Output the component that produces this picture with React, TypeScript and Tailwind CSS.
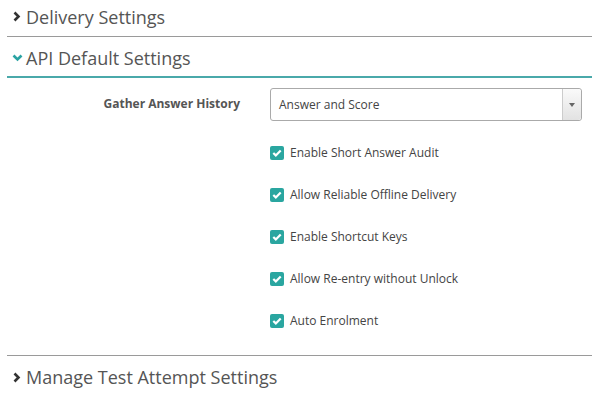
import { useState } from "react";

const options = [
  "Enable Short Answer Audit",
  "Allow Reliable Offline Delivery",
  "Enable Shortcut Keys",
  "Allow Re-entry without Unlock",
  "Auto Enrolment",
];

function Chevron({ open }: { open?: boolean }) {
  if (open) {
    return (
      <svg width="11" height="8" viewBox="0 0 11 8" className="shrink-0">
        <path d="M1.5 1.5 L5.5 5.5 L9.5 1.5" fill="none" stroke="#2aa3a3" strokeWidth="2.6" />
      </svg>
    );
  }
  return (
    <svg width="8" height="11" viewBox="0 0 8 11" className="shrink-0">
      <path d="M1.5 1.5 L5.5 5.5 L1.5 9.5" fill="none" stroke="#333" strokeWidth="2.6" />
    </svg>
  );
}

function Check() {
  return (
    <span className="flex h-[14px] w-[14px] items-center justify-center rounded-[2px] bg-[#2aa6a0]">
      <svg width="10" height="8" viewBox="0 0 10 8">
        <path d="M1.3 4 L3.8 6.4 L8.7 1.4" fill="none" stroke="#fff" strokeWidth="2.2" />
      </svg>
    </span>
  );
}

export default function App() {
  const [checked] = useState(options.map(() => true));

  return (
    <div className="h-[396px] w-[600px] bg-white pl-[7px] pr-[8px] font-['Open_Sans',sans-serif] text-[#555]">
      <div className="flex h-[37px] items-center gap-[5px] border-b border-[#9a9a9a] pl-[6px] pb-[3px]">
        <Chevron />
        <span className="text-[18px] leading-none">Delivery Settings</span>
      </div>

      <div className="flex h-[41px] items-center gap-[3px] border-b-2 border-[#4aa9aa] pl-[5px] pt-[2px]">
        <Chevron open />
        <span className="text-[18px] leading-none">API Default Settings</span>
      </div>

      <div className="h-[278px] border-b border-[#9a9a9a]">
        <div className="flex pt-[10px]">
          <div className="w-[233px] pt-[7px] text-right text-[12px] font-bold text-[#555]">
            Gather Answer History
          </div>
          <div className="ml-[30px] flex h-[33px] w-[312px] items-center rounded-[3px] border border-[#aaa] bg-white">
            <span className="flex-1 pl-[8px] text-[12px] text-[#444]">Answer and Score</span>
            <span className="flex h-full w-[19px] items-center justify-center rounded-r-[3px] border-l border-[#ccc] bg-gradient-to-b from-[#fafafa] to-[#e2e2e2]">
              <svg width="6" height="4" viewBox="0 0 6 4">
                <path d="M0 0 L6 0 L3 4 Z" fill="#666" />
              </svg>
            </span>
          </div>
        </div>

        <div className="ml-[263px] mt-[25px] flex flex-col gap-[28px]">
          {options.map((o, i) => (
            <div key={o} className="flex h-[14px] items-center gap-[6px]">
              {checked[i] && <Check />}
              <span className="text-[12px] text-[#444]">{o}</span>
            </div>
          ))}
        </div>
      </div>

      <div className="flex h-[42px] items-center gap-[5px] pl-[6px]">
        <Chevron />
        <span className="text-[18px] leading-none">Manage Test Attempt Settings</span>
      </div>
    </div>
  );
}
